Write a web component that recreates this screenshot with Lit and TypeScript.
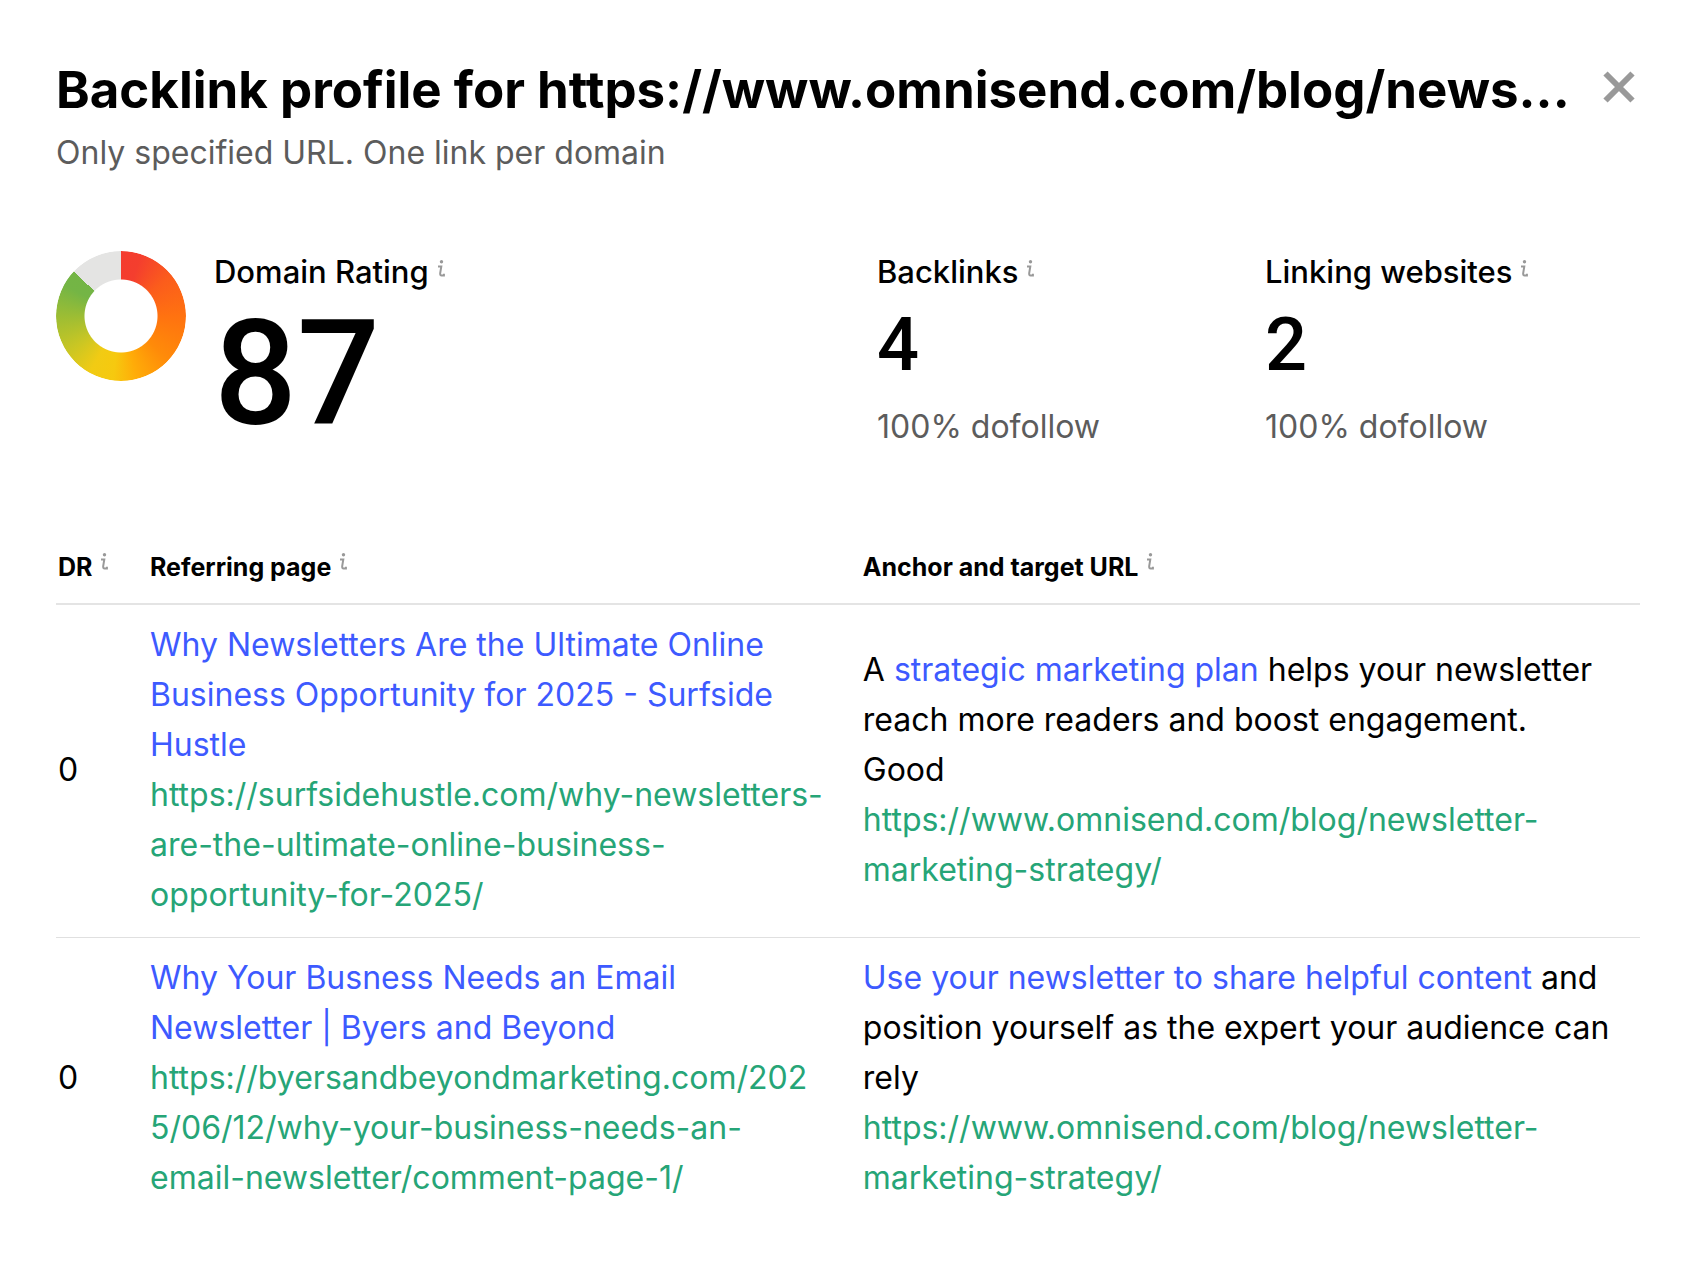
import { LitElement, html, css } from "lit";
import type { TemplateResult } from "lit";
import { customElement, property } from "lit/decorators.js";

interface Backlink {
  rating: number;
  title: string;
  page: string;
  anchor: TemplateResult;
  target: string;
}

const TARGET = "https://www.omnisend.com/blog/newsletter-marketing-strategy/";

const BACKLINKS: Backlink[] = [
  {
    rating: 0,
    title: "Why Newsletters Are the Ultimate Online Business Opportunity for 2025 - Surfside Hustle",
    page: "https://surfsidehustle.com/why-newsletters-are-the-ultimate-online-business-opportunity-for-2025/",
    anchor: html`A <a class="link" href=${TARGET}>strategic marketing plan</a> helps your newsletter reach more readers and boost engagement. Good`,
    target: TARGET,
  },
  {
    rating: 0,
    title: "Why Your Busness Needs an Email Newsletter | Byers and Beyond",
    page: "https://byersandbeyondmarketing.com/2025/06/12/why-your-business-needs-an-email-newsletter/comment-page-1/",
    anchor: html`<a class="link" href=${TARGET}>Use your newsletter to share helpful content</a> and position yourself as the expert your audience can rely`,
    target: TARGET,
  },
];

@customElement("info-mark")
export class InfoMark extends LitElement {
  static styles = css`
    :host {
      display: inline-block;
      flex: none;
      width: 8px;
      height: 17px;
    }
    .mark {
      display: block;
    }
  `;

  render() {
    return html`<svg class="mark" width="8" height="17" viewBox="0 0 8 17" aria-hidden="true">
      <circle cx="4.5" cy="1.8" r="1.7" fill="#999" />
      <path d="M1 6.4H4.3L3.2 13.2Q2.9 15.4 4.6 15.4H6.9V13.8" fill="none" stroke="#999" stroke-width="2" />
    </svg>`;
  }
}

@customElement("rating-donut")
export class RatingDonut extends LitElement {
  @property({ type: Number }) value = 0;

  static styles = css`
    :host {
      display: block;
      flex: none;
      width: 130px;
      height: 130px;
    }
    .ring {
      width: 100%;
      height: 100%;
      border-radius: 50%;
      background:
        conic-gradient(transparent var(--filled), #e4e4e3 0),
        conic-gradient(
          #f43c2f 0%,
          #f43e2e 5%,
          #fb5c1c 14%,
          #ff7210 25%,
          #ff8b09 37%,
          #ffac08 46%,
          #f6c90f 52%,
          #f1cb14 58%,
          #c8c624 66%,
          #9cbd34 75%,
          #74b545 83%,
          #70b445 100%
        );
      mask: radial-gradient(circle, transparent 36px, #000 37px);
    }
  `;

  render() {
    return html`<div class="ring" role="img" aria-label="${this.value} out of 100" style="--filled: ${this.value}%"></div>`;
  }
}

@customElement("app-root")
export class AppRoot extends LitElement {
  static styles = css`
    :host {
      display: block;
      min-height: 100vh;
      box-sizing: border-box;
      padding: 60px 56px;
      background: #fff;
      color: #000;
      font: 400 32px/50px Inter, "Liberation Sans", sans-serif;
    }
    .head {
      display: flex;
      justify-content: space-between;
      align-items: flex-start;
      gap: 24px;
    }
    .titles {
      min-width: 0;
    }
    .title {
      margin: 0 0 13px;
      font-size: 51px;
      line-height: 60px;
      font-weight: 700;
      white-space: nowrap;
      overflow: hidden;
      text-overflow: ellipsis;
    }
    .muted {
      margin: 0;
      line-height: 40px;
      color: #5c5c5c;
    }
    .close {
      flex: none;
      margin: 0;
      padding: 11px 5px;
      border: 0;
      background: none;
      cursor: pointer;
    }
    .cross {
      display: block;
    }
    .stats {
      display: grid;
      grid-template-columns: 821fr 388fr 375fr;
      margin-top: 78px;
    }
    .rating {
      display: flex;
      gap: 28px;
    }
    .label {
      display: flex;
      gap: 8px;
      margin: 0;
      font-size: 31px;
      line-height: 42px;
      font-weight: 500;
    }
    .label info-mark {
      margin-top: 9px;
    }
    .number {
      margin: 0;
      font-family: Roboto, "Liberation Sans", sans-serif;
      font-size: 74px;
      line-height: 104px;
      font-weight: 500;
    }
    .number.big {
      font-size: 146px;
      line-height: 164px;
    }
    .stat .muted {
      margin-top: 10px;
    }
    .table {
      width: 100%;
      margin-top: 95px;
      border-collapse: separate;
      border-spacing: 0;
      table-layout: fixed;
    }
    .col-rating {
      width: 94px;
    }
    .col-page {
      width: 45%;
    }
    .table th {
      padding: 0 0 21px;
      border-bottom: 2px solid #e4e4e4;
      text-align: left;
    }
    .heading {
      display: flex;
      gap: 8px;
      font-size: 25px;
      line-height: 30px;
      font-weight: 700;
    }
    .heading info-mark {
      margin-top: 1px;
    }
    .table td {
      padding: 15px 0 17px;
      vertical-align: middle;
      overflow-wrap: anywhere;
    }
    .table tbody tr:not(:last-child) td {
      border-bottom: 1px solid #e0e0e0;
    }
    .table .rating-cell {
      padding-left: 2px;
    }
    .table td.page {
      padding-right: 38px;
    }
    .table td.anchor {
      padding-right: 27px;
    }
    .link {
      color: #3d5aff;
      text-decoration: none;
    }
    .url {
      display: block;
      color: #26a577;
      text-decoration: none;
    }
  `;

  private stat(label: string, value: number) {
    return html`<section class="stat">
      <h2 class="label">${label}<info-mark></info-mark></h2>
      <p class="number">${value}</p>
      <p class="muted">100% dofollow</p>
    </section>`;
  }

  private heading(text: string, cell = "") {
    return html`<th class=${cell} scope="col"><div class="heading">${text}<info-mark></info-mark></div></th>`;
  }

  private row(link: Backlink) {
    return html`<tr>
      <td class="rating-cell">${link.rating}</td>
      <td class="page">
        <a class="link" href=${link.page}>${link.title}</a>
        <a class="url" href=${link.page}>${link.page}</a>
      </td>
      <td class="anchor">
        ${link.anchor}
        <a class="url" href=${link.target}>${link.target}</a>
      </td>
    </tr>`;
  }

  render() {
    return html`
      <header class="head">
        <div class="titles">
          <h1 class="title">Backlink profile for https://www.omnisend.com/blog/news...</h1>
          <p class="muted">Only specified URL. One link per domain</p>
        </div>
        <button class="close" type="button" aria-label="Close">
          <svg class="cross" width="32" height="32" viewBox="0 0 32 32">
            <path d="M2.5 2.5L29.5 29.5M29.5 2.5L2.5 29.5" fill="none" stroke="#999" stroke-width="6" />
          </svg>
        </button>
      </header>
      <div class="stats">
        <div class="rating">
          <rating-donut .value=${87}></rating-donut>
          <section>
            <h2 class="label">Domain Rating<info-mark></info-mark></h2>
            <p class="number big">87</p>
          </section>
        </div>
        ${this.stat("Backlinks", 4)} ${this.stat("Linking websites", 2)}
      </div>
      <table class="table">
        <colgroup>
          <col class="col-rating" />
          <col class="col-page" />
          <col />
        </colgroup>
        <thead>
          <tr>
            ${this.heading("DR", "rating-cell")} ${this.heading("Referring page")}
            ${this.heading("Anchor and target URL")}
          </tr>
        </thead>
        <tbody>
          ${BACKLINKS.map((link) => this.row(link))}
        </tbody>
      </table>
    `;
  }
}
